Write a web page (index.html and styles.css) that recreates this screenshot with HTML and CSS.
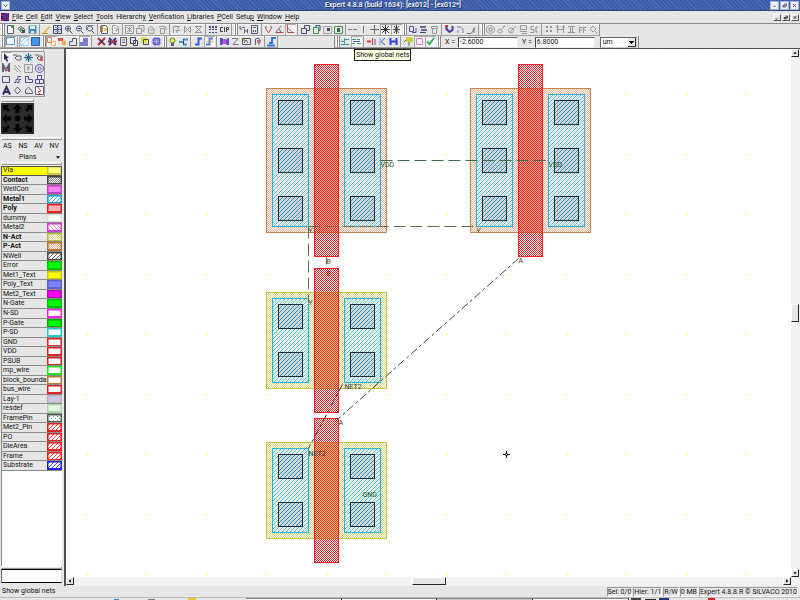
FILE: index.html
```html
<!DOCTYPE html>
<html lang="en">
<head>
<meta charset="utf-8">
<title>Expert 4.8.8 (build 1634): [ex012] - [ex012*]</title>
<link rel="stylesheet" href="styles.css">
</head>
<body>
<header class="titlebar">
  <button class="win-btn" aria-label="Window menu"><svg viewBox="0 0 9 9"><path d="M2 3l2.500 3L7 3" fill="none" stroke="#335" /></svg></button>
  <h1>Expert 4.8.8 (build 1634): [ex012] - [ex012*]</h1>
  <div class="win-group">
    <button class="win-btn" aria-label="Minimize"><svg viewBox="0 0 9 9"><path d="M3 5.500h3" stroke="#335"/></svg></button>
    <button class="win-btn" aria-label="Restore"><svg viewBox="0 0 9 9"><path d="M2.500 4.500h3v2h-3zM4 2.500h3v3" fill="none" stroke="#335"/></svg></button>
    <button class="win-btn" aria-label="Close"><svg viewBox="0 0 9 9"><path d="M2.500 2.500l4 4m0-4l-4 4" stroke="#335"/></svg></button>
  </div>
</header>
<nav class="menubar">
  <svg class="app-icon" viewBox="0 0 9 9"><path fill="#102080" d="M0 0h9v9H0z"/><path fill="#e01840" d="M0 1h3v2H0zM5 0h3v2H5zM2 4h4v2H2zM0 7h3v2H0zM7 5h2v3H7z"/><path fill="#4060ff" d="M3 2h2v2H3zM6 3h2v1H6zM4 7h2v1H4z"/></svg>
  <a href="#"><u>F</u>ile</a><a href="#"><u>C</u>ell</a><a href="#"><u>E</u>dit</a><a href="#"><u>V</u>iew</a><a href="#"><u>S</u>elect</a><a href="#"><u>T</u>ools</a><a href="#">Hierarch<u>y</u></a><a href="#"><u>V</u>erification</a><a href="#"><u>L</u>ibraries</a><a href="#"><u>P</u>Cell</a><a href="#">Setu<u>p</u></a><a href="#"><u>W</u>indow</a><a href="#"><u>H</u>elp</a>
  <div class="mdi-group">
    <button class="mdi-btn" aria-label="Minimize document"><svg viewBox="0 0 8 7"><path d="M2 5.500h3" stroke="#000"/></svg></button>
    <button class="mdi-btn" aria-label="Restore document"><svg viewBox="0 0 8 7"><path d="M1.500 3.500h3v2h-3zM3 1.500h3v3" fill="none" stroke="#000"/></svg></button>
    <button class="mdi-btn" aria-label="Close document"><svg viewBox="0 0 8 7"><path d="M2 1.500l4 4m0-4l-4 4" stroke="#000"/></svg></button>
  </div>
</nav>
<div class="toolrow">
  <div class="toolbar" data-tools=": new open save | pen fit zoomin zoomout zoomsel | paste gpage | gsel gcopy ghand gturn | gflag gmir gsand / dots cif | : net calc | tri ang ang2* / cas1 cas2 cas3 cas4 | dash vline cross star* star2* : rev stack gtrash / mag hook pen2 | : gcirc ggear ggear2 gbox gsc / g4 gh gi gff gzoom"></div>
</div>
<div class="toolrow">
  <div class="toolbar" data-tools=": sqo* | sqh* sqf : lay1* lay2 poly1 poly2* _ x1 x2 doc1 doc2 doc3 doc4 : bulb plug / snake snake2* / bow gz pic ear | wave"></div>
  <div class="toolbar second" data-tools=": nets nets2* / rnet knet hnet / note pink* check* :">
  </div>
  <form class="coords">
    <label for="cx">X =</label><input id="cx" value="-2.6000">
    <label for="cy">Y =</label><input id="cy" value="6.8000">
    <select aria-label="Units"><option>um</option></select>
  </form>
</div>
<div class="workspace">
  <aside class="side">
    <div class="grip short"></div>
    <div class="toolbox" data-box="arrow* hand move handr mred ghatch gpat ring rect snk ell boxes text circ blob red"></div>
    <div class="grip short mid"></div>
    <svg class="navpad" viewBox="0 0 33 31" role="img" aria-label="Pan">
      <path fill="#2c2c2c" d="M0 0h33v31H0z"/>
      <g fill="#050505"><path d="M16.500 1l5 5h-3v4h-4V6h-3zM16.500 30l5-5h-3v-4h-4v4h-3zM1 15.500l5-5v3h4v4H6v3zM32 15.500l-5-5v3h-4v4h4v3zM2 2h6L6 4l3 3-2 2-3-3-2 2zM31 2h-6l2 2-3 3 2 2 3-3 2 2zM2 29h6l-2-2 3-3-2-2-3 3-2-2zM31 29h-6l2-2-3-3 2-2 3 3 2-2z"/><circle cx="16.500" cy="15.500" r="3"/></g>
    </svg>
    <div class="grip wide"></div>
    <div class="filters"><button>AS</button><button>NS</button><button>AV</button><button>NV</button></div>
    <button class="plans">Plans<svg viewBox="0 0 5 3"><path d="M0 0h5L2.500 3z"/></svg></button>
    <div class="grip wide"></div>
    <ul class="layers"></ul>
    <div class="blank"></div>
    <div class="grip wide"></div>
    <div class="entry"></div>
  </aside>
  <main class="view">
    <div class="canvas-row">
      <svg class="canvas" role="img" aria-label="Layout view">
        <defs>
          <pattern id="grid" width="6" height="6" patternUnits="userSpaceOnUse"><path fill="#ffffe0" d="M2 3h1v1H2z"/></pattern>
          <pattern id="major" x="-10" y="15" width="60" height="60" patternUnits="userSpaceOnUse"><path fill="#ffffa8" d="M30 29h1v3h-1zM29 30h3v1h-3z"/></pattern>
          <pattern id="poly" x=".5" y=".5" width="2" height="2" patternUnits="userSpaceOnUse"><path fill="#ff1c24" d="M0 0h1v1H0zM1 1h1v1H1z"/></pattern>
          <pattern id="pact" x=".5" y=".5" width="2" height="2" patternUnits="userSpaceOnUse"><path fill="#dca078" fill-opacity=".8" d="M1 0h1v1H1zM0 1h1v1H0z"/></pattern>
          <pattern id="nact" x=".5" y=".5" width="2" height="2" patternUnits="userSpaceOnUse"><path fill="#cccc60" fill-opacity=".8" d="M1 0h1v1H1zM0 1h1v1H0z"/></pattern>
          <pattern id="metal" x=".5" y=".5" width="4" height="4" patternUnits="userSpaceOnUse"><path fill="#e0f8ff" fill-opacity=".5" d="M0 0h4v4H0z"/><path stroke="#38b4dc" stroke-opacity=".8" d="M-1 1l2-2M0 4l4-4M3 5l2-2"/></pattern>
          <pattern id="cont" x=".5" y=".5" width="4" height="4" patternUnits="userSpaceOnUse"><path fill="#88a8bc" fill-opacity=".3" d="M0 0h4v4H0z"/><path stroke="#2078a4" stroke-opacity=".75" d="M-1 1l2-2M0 4l4-4M3 5l2-2"/></pattern>
          <g id="strip3"><rect class="metal" width="36" height="132"/><rect class="cont" x="6" y="6" width="24" height="24"/><rect class="cont" x="6" y="54" width="24" height="24"/><rect class="cont" x="6" y="102" width="24" height="24"/></g>
          <g id="strip2"><rect class="metal" width="36" height="84"/><rect class="cont" x="6" y="6" width="24" height="24"/><rect class="cont" x="6" y="54" width="24" height="24"/></g>
          <g id="pmos"><rect class="pact" y="24" width="120" height="144"/><rect class="poly" x="48" width="24" height="192"/><use href="#strip3" x="6" y="30"/><use href="#strip3" x="78" y="30"/></g>
          <g id="nmos"><rect class="nact" y="24" width="120" height="96"/><rect class="poly" x="48" width="24" height="144"/><use href="#strip2" x="6" y="30"/><use href="#strip2" x="78" y="30"/></g>
        </defs>
        <rect width="100%" height="100%" fill="#fff"/>
        <rect width="100%" height="100%" fill="url(#grid)"/>
        <rect width="100%" height="100%" fill="url(#major)"/>
        <g transform="translate(-65.500 -48.500)">
          <use href="#pmos" x="266" y="64"/>
          <use href="#pmos" x="470" y="64"/>
          <use href="#nmos" x="266" y="268"/>
          <use href="#nmos" x="266" y="418"/>
          <g class="nets" fill="none">
            <path stroke="#3c6c50" stroke-dasharray="12 5" d="M380 160H548"/>
            <path stroke="#706840" stroke-dasharray="12 5" d="M308 226H474"/>
            <path stroke="#706840" stroke-dasharray="12 5" d="M308 226V302"/>
            <path stroke="#66683c" d="M326 256v8"/>
            <path stroke="#444430" stroke-dasharray="8 3 3 3" d="M518 258L338 418"/>
            <path stroke="#204048" stroke-dasharray="8 3 3 3" d="M342 384L308 448"/>
          </g>
          <g class="labels">
            <g fill="#1c5030"><text x="380" y="166">VDD</text><text x="548" y="166">VDD</text></g>
            <g fill="#50501c"><text x="308" y="232">Y</text><text x="476" y="232">Y</text><text x="308" y="304">Y</text><text x="326" y="263">B</text></g>
            <text x="326" y="275" fill="#801004">B</text>
            <g fill="#184048"><text x="344" y="388">NET2</text><text x="308" y="455">NET2</text></g>
            <text x="362" y="496" fill="#205010">GND</text>
            <g fill="#383818"><text x="518" y="262">A</text><text x="338" y="424">A</text></g>
          </g>
          <path fill="#888" d="M504.500 452.500h3v3h-3z"/><path fill="none" stroke="#000" d="M502.500 454h7M506 450.500v7"/><path fill="#fff" d="M505.500 453.500h1v1h-1z"/>
        </g>
      </svg>
      <div class="vscroll"><button aria-label="Scroll up"><svg viewBox="0 0 7 7"><path d="M1.500 4.500L3.500 2l2 2.500z"/></svg></button><div class="vthumb"></div><button aria-label="Scroll down"><svg viewBox="0 0 7 7"><path d="M1.500 2.500L3.500 5l2-2.500z"/></svg></button></div>
    </div>
    <div class="hscroll"><button aria-label="Scroll left"><svg viewBox="0 0 7 7"><path d="M4.500 1.500L2 3.500l2.500 2z"/></svg></button><div class="hthumb"></div><button aria-label="Scroll right"><svg viewBox="0 0 7 7"><path d="M2.500 1.500L5 3.500l-2.500 2z"/></svg></button></div>
    <div class="tooltip" role="tooltip">Show global nets</div>
  </main>
</div>
<footer class="status">
  <span class="hint">Show global nets</span>
  <span class="cell">Sel: 0/0</span><span class="cell">Hier: 1/1</span><span class="cell">R/W</span><span class="cell">0 MB</span><span class="cell">Expert 4.8.8.R © SILVACO 2010</span>
</footer>
<div class="taskbar"><i class="launch"></i><i class="task"></i><i class="task"></i><i class="task dim"></i><i class="task"></i><i class="tray"></i></div>
<script src="app.js"></script>
</body>
</html>
```
FILE: styles.css
```css
* { box-sizing: border-box; }
html, body { height: 100%; }
body {
  margin: 0;
  display: flex;
  flex-direction: column;
  overflow: hidden;
  background: #e6e6e6;
  color: #111;
  font: 7px/9px Roboto, "Liberation Sans", sans-serif;
}
button, input, select { font: inherit; color: inherit; }
button { padding: 0; border: 0; background: none; display: block; }
svg { display: block; }
a { color: inherit; text-decoration: none; }
u { text-underline-offset: 1px; text-decoration-thickness: 1px; }

.titlebar {
  flex: none;
  display: flex;
  align-items: center;
  height: 11px;
  padding: 0 1px;
  color: #fff;
  border-bottom: 1px solid #2c4480;
  background: repeating-linear-gradient(45deg, #4a6cb4 0 1px, #3c5ca4 1px 3px);
}
.titlebar h1 { flex: 1; margin: 0; padding-left: 6px; font-size: 7px; line-height: 9px; font-weight: 500; text-align: center; text-shadow: 1px 1px #1c2c60; }
.win-group { display: flex; gap: 1px; }
.win-btn { width: 9px; height: 9px; background: #eef0f8; border: 1px solid #a8b4d4; }
.win-btn svg { width: 7px; height: 7px; }

.menubar { flex: none; display: flex; align-items: center; height: 13px; gap: 3px; padding: 0 1px; border-bottom: 1px solid #8c8c8c; }
.menubar .app-icon { width: 8px; height: 8px; }
.mdi-group { margin-left: auto; display: flex; gap: 1px; }
.mdi-btn { width: 8px; height: 7px; border: 1px solid; border-color: #fff #555 #555 #fff; background: #e6e6e6; }
.mdi-btn svg { width: 6px; height: 5px; }

.toolrow { flex: none; display: flex; height: 12px; }
.toolbar { display: flex; align-items: center; border-right: 1px solid #8c8c8c; border-bottom: 1px solid #a0a0a0; box-shadow: inset 0 1px #fafafa; }
.toolbar.second { margin-left: 56px; border-left: 1px solid #8c8c8c; border-right: 0; }
.tool { width: 11px; height: 11px; }
.tool svg { width: 11px; height: 11px; opacity: .85; }
.tool.on { background: #f4f4f6; box-shadow: inset 1px 1px #aaa; }
.sep3, .sep4, .sep5, .sep6 { height: 11px; background: linear-gradient(#999, #999) 1px 0 / 1px 100% no-repeat; }
.sep3 { width: 3px; }
.sep4 { width: 4px; }
.sep6 { width: 6px; }
.sep5 { width: 5px; background: linear-gradient(90deg, transparent 1px, #fff 1px 2px, #888 2px 3px, #fff 3px 4px, #888 4px); }
.coords { display: flex; align-items: center; border-right: 1px solid #888; padding: 0 1px 0 4px; }
.coords input { width: 60px; height: 11px; border: 1px solid; border-color: #666 #eee #eee #444; background: #fff; padding: 0 1px; margin: 0 4px 0 3px; }
.coords select {
  width: 37px; height: 11px; border: 1px solid; border-color: #666 #ccc #ccc #666; padding: 0 2px; margin-left: 1px; border-radius: 0; appearance: none;
  background: linear-gradient(#000, #000) right 2px top 3px / 5px 1px no-repeat, linear-gradient(#000, #000) right 3px top 4px / 3px 1px no-repeat, linear-gradient(#000, #000) right 4px top 5px / 1px 1px no-repeat, linear-gradient(#333, #333) right 0 top 0 / 1px 100% no-repeat, linear-gradient(#333, #333) right 0 bottom 0 / 8px 1px no-repeat, linear-gradient(#e6e6e6, #e6e6e6) right / 8px 100% no-repeat, #fff;
}

.workspace { flex: 1; min-height: 0; display: flex; }
.side { flex: none; width: 64px; display: flex; flex-direction: column; padding: 0 2px 3px 1px; border-top: 1px solid #888; }
.grip { flex: none; height: 3px; border: 1px solid; border-color: #fff #999 #999 #fff; }
.grip.short { width: 43px; }
.grip.mid { width: 33px; margin: 2px 0 1px; }
.toolbox { display: grid; grid-template-columns: repeat(4, 11px); grid-auto-rows: 11px; width: 44px; border-right: 1px solid #999; border-bottom: 1px solid #999; }
.toolbox .tool { height: 10px; }
.navpad { width: 33px; height: 31px; margin-bottom: 3px; }
.filters { display: flex; justify-content: space-between; padding: 2px 3px 0 2px; }
.plans { display: flex; align-items: center; justify-content: space-between; padding: 2px 2px 0 18px; }
.plans svg { width: 4px; height: 3px; }
.layers { flex: none; list-style: none; margin: 1px 0 0; padding: 0; height: 305px; display: grid; grid-auto-rows: 1fr; }
.layer { display: flex; min-height: 0; overflow: hidden; border-bottom: 1px solid #8c8c8c; border-left: 1px solid #888; }
.layer span { flex: 1; min-width: 0; padding-left: 1px; overflow: hidden; white-space: nowrap; }
.layer.bold span { font-weight: 700; }
.layer.sel { background: #ff0; outline: 1px solid #555; outline-offset: -1px; }
.swatch { width: 15px; height: 100%; flex: none; }
.blank { flex: 1; background: #fff; border-left: 1px solid #888; }
.entry { height: 14px; background: #fff; border: 1px solid #000; border-color: #000 #ddd #000 #666; }

.view { flex: 1; min-width: 0; position: relative; display: flex; flex-direction: column; border-left: 2px solid #505050; border-top: 1px solid #505050; }
.canvas-row { flex: 1; min-height: 0; display: flex; }
.canvas { flex: 1; min-width: 0; height: 100%; }
.canvas .pact { fill: url(#pact); stroke: #c88450; }
.canvas .nact { fill: url(#nact); stroke: #c4c440; }
.canvas .poly { fill: url(#poly); stroke: #ff1820; }
.canvas .metal { fill: url(#metal); stroke: #28b0e0; }
.canvas .cont { fill: url(#cont); stroke: #202840; }
.labels { font-size: 7px; }
.vscroll { width: 9px; background: #f2f2f2; display: flex; flex-direction: column; }
.vscroll button, .hscroll button { width: 8px; height: 8px; border: 1px solid; border-color: #fff #222 #222 #fff; background: #e6e6e6; }
.vscroll svg, .hscroll svg { width: 6px; height: 6px; }
.vthumb { width: 8px; height: 18px; margin: 247px 0 auto; border: 1px solid; border-color: #fff #222 #222 #fff; background: #e6e6e6; }
.hscroll { height: 9px; background: #f2f2f2; display: flex; padding-right: 9px; }
.hthumb { width: 34px; height: 8px; margin: 0 auto; border: 1px solid; border-color: #fff #222 #222 #fff; background: #e6e6e6; }
.tooltip { position: absolute; left: 288px; top: 0; padding: 0 1px; line-height: 10px; background: #ffffe4; border: 1px solid #222; white-space: nowrap; }

.status { flex: none; display: flex; align-items: center; height: 11px; padding: 0 2px; gap: 1px; }
.status .hint { flex: 1; }
.status .cell { border: 1px solid; border-color: #999 #fff #fff #999; white-space: nowrap; line-height: 8px; }
.taskbar { flex: none; display: flex; height: 3px; border-top: 1px solid #bbb; }
.taskbar .launch { flex: 247; background: linear-gradient(#38c, #38c) 114px 1px / 5px 2px no-repeat, linear-gradient(#778, #778) 148px 1px / 7px 2px no-repeat, linear-gradient(#ec3, #ec3) 188px 0 / 8px 2px no-repeat; }
.taskbar .task { flex: 95; background: #f6f6f6; border-right: 1px solid #222; border-top: 1px solid #888; }
.taskbar .dim { background: #c8c8c8; }
.taskbar .tray { flex: 172; background: linear-gradient(#444, #444) 2px 0 / 10px 3px no-repeat, linear-gradient(#222, #222) 16px 1px / 11px 2px no-repeat, linear-gradient(#238, #238) 30px 0 / 10px 3px no-repeat, linear-gradient(#c22, #c22) 79px 0 / 7px 3px no-repeat; }
```
FILE: app.js
```js
// p(): stroked path, f(): filled path, both on an 11 x 11 box
const p = (d, c = "#223060", w = 1) => `<path d="${d}" fill="none" stroke="${c}" stroke-width="${w}"/>`;
const f = (d, c = "#223060") => `<path d="${d}" fill="${c}"/>`;
const g = "#8a8a8a";
const lens = p("M5 2a2.500 2.500 0 1 1-.1 0M7 7l2.500 2.500");
const page = (c) => `<path d="M2.500 1.500h4l2 2v6h-6z" fill="#fff" stroke="${c}"/>`;
const stairs = (c) => p("M2 8.500h3.500V2.500H9", c, 2);

const icons = {
  new: page("#345") + f("M6 1h3v3H6z", "#282"),
  open: p("M2 4.500l3-2 4 3-3 3.500z", "#445") + f("M4 4h3v3H4z", "#2a4") + f("M6 6h3v3H6z", "#333"),
  save: f("M1.500 1.500h8v8h-8z", "#2878b8") + f("M3 2h5v3H3zM4 7h3v2H4z", "#eef"),
  pen: f("M2 9l6-7 1 1-5 6z", "#e0b020") + p("M1 9.500h6", "#a80"),
  fit: p("M1.500 1.500h8v8h-8zM5.500 2v7M2 5.500h7") + p("M3 3.500h5M3 7.500h5", "#68a"),
  zoomin: lens + p("M3.500 4.500h3M5 3v3"), zoomout: lens + p("M3.500 4.500h3"),
  zoomsel: lens + p("M1.500 6V1.500H8.500", "#668"),
  paste: page("#445") + f("M1 2h3v6H1z", "#987030") + f("M5 4h3v3H5z", "#dc4"),
  gpage: page(g) + p("M4 4h3v3H5", g),
  gsel: p("M1.500 1.500h8v8h-8zM3 3l5 5M8 3L3 8M5.500 3v5", g),
  gcopy: p("M1.500 4.500h5v5h-5zM4 4V1.500h5V7H7", g),
  ghand: p("M2.500 9V5L5 2l3 3v4.500zM4 6h3", g),
  gturn: p("M3.500 4.500h4v5h-4zM2 3l3-1 4 1v3", g),
  gflag: p("M2.500 9V2.500h6l-2 2 2 2h-4M6 9V7", g),
  gmir: p("M2.500 2v7M8.500 2v7M3 3l5 5M8 3L3 8", g),
  gsand: p("M2 2.500h7M2 8.500h7M3 3l5 5M8 3L3 8", g),
  dots: f("M1 2h2v2H1zM4 2h2v2H4zM7 2h2v2H7zM1 5h2v1H1zM4 5h2v1H4zM7 5h2v1H7zM1 8h2v1H1zM4 8h2v1H4zM7 8h2v1H7z"),
  cif: p("M4 3.500H1.500v4H4M5.500 3v5M7.500 8V3.500h2v2H8", "#223"),
  net: p("M2 2v3h2M4 3.500h3M6.500 5v4M9.500 5v4M7 7h2", "#445"),
  calc: p("M2.500 1.500h6v8h-6z", "#346") + f("M4 3h3v1H4zM4 6h1v2H4zM6 6h1v2H6z", "#346"),
  tri: p("M2 3l3.500 6L9 3M2 3h2M7 3h2", "#a44"),
  ang: p("M1.500 8.500h8M2 8l5-6", "#a33") + p("M5 5l2 3", "#446"),
  ang2: p("M2.500 1v7.500H9.500", "#a33") + p("M3 4l4 4", "#c55"),
  cas1: p("M1.500 4.500h5v5h-5zM4.500 4V1.500h5v5H7"),
  cas2: p("M2.500 3.500h5v6h-5z", "#283") + p("M5 3V1.500h4v5H8"),
  cas3: p("M1.500 2.500h8v7h-8z", "#99a") + f("M5 4h3v3H5z"),
  cas4: p("M1.500 2.500h8v7h-8z", "#283") + f("M4 4h3v4H4z", "#152"),
  dash: p("M1 5.500h4M6 5.500h4", "#667"), vline: p("M5.500 2v7", "#667"), cross: p("M5.500 1v9M1 5.500h9", "#556"),
  star: p("M5.500 1v9M1 5.500h9M2 2l7 7M9 2L2 9", "#111"), star2: p("M5.500 1v9M2 5.500h7M3 2l5 7M8 2L3 9", "#223"),
  rev: p("M2.500 2.500h4v5h-4zM5 8.500h4V4", "#338"), stack: f("M2 2h6v2H2zM3 5h6v2H3z", "#558") + p("M2 8.500h6"),
  gtrash: p("M2.500 2.500h6v2h-6zM3.500 5v4.500h4V5", g),
  mag: p("M2.500 1v4l3 3 3-2V2", "#228", 2) + f("M1 1h3v2H1z", "#c22"), hook: p("M2 3h4l2 2v4M3 6v3", "#778"), pen2: p("M1 9.500h4l4-6M8 4v5", "#556"),
  gcirc: p("M5.500 1.500a4 4 0 1 1-.1 0M4 4h3v3H4z", g), ggear: p("M4 5a2 2 0 1 1-.1 0M6 5l3-3H7", g), ggear2: p("M4 4a2.500 2.500 0 1 1-.1 0M6 5l3-3M2 9l4-4", g),
  gbox: p("M2.500 1.500h6v4h-6zM2 7.500h7M4 9.500h5", g), gsc: p("M5 2.500H2v3h3v3H1M9 3H7v5h2", g),
  g4: f("M2 2h2v2H2zM6 2h2v2H6zM2 6h2v2H2zM6 6h2v2H6z", g), gh: p("M2.500 1v8M8.500 1v8M3 5.500h5M1 3h3M7 3h3", g),
  gi: p("M2 2.500h7M2 8.500h7M4.500 2v7M6.500 2v7", g), gff: p("M2.500 9V3.500h3M3 6h2M6.500 9V3.500h3M7 6h2", g), gzoom: p("M5 2l3 3-3 3-3-3zM7 7l2.500 2.500", g),
  sqo: p("M1.500 1.500h8v7h-8z", "#38c"), sqh: p("M1.500 1.500h8v8h-8zM2 6l4-4M3 9l6-6", "#8cf"), sqf: `<path d="M1.500 1.500h8v8h-8z" fill="#28e" stroke="#248"/>`,
  lay1: p("M1.500 1.500h4v5h-4z", "#e63") + p("M5.500 5.500h4v4h-4z", "#fa3"), lay2: f("M1 2h5v3H1z", "#e33") + f("M5 5h4v4H5z", "#f93"),
  poly1: p("M1.500 9.500v-4h3v-3h4v7z", "#446"), poly2: f("M1 10V6h3V2h5v8z", "#66c"),
  x1: p("M2 2l7 7M9 2L2 9", "#a13", 2) + f("M4 4h3v3H4z", "#224"), x2: p("M2 2l7 7M9 2L2 9M1 5.500h9", "#216", 2) + f("M4 4h3v3H4z", "#c22"),
  doc1: p("M2.500 1.500h6v8h-6zM4 4h3M4 6.500h3", "#446"), doc2: p("M1.500 1.500h5v6h-5zM4.500 4.500h4v5h-4z", "#224", 1), doc3: f("M1 1h6v6H1z", "#dd2") + p("M3.500 3.500h5v5h-5z", "#334"),
  doc4: p("M2.500 2.500h6v6h-6zM1 4h9M1 7h9M4 1v9M7 1v9", "#44c"),
  bulb: `<circle cx="5.500" cy="4.500" r="2.500" fill="#ee2" stroke="#663"/>` + f("M4 7h3v3H4z", "#445"), plug: p("M1 6h4M5 3.500h5M5 8.500h4", "#28c", 2) + p("M5.500 3v6"),
  snake: stairs("#14d"), snake2: stairs("#46c") + p("M3 5.500h6", "#aa4"),
  bow: f("M1 2h2l3 3 3-3h1v7H8L5.500 6 3 9H1z", "#33d") + f("M4 3h3v5H4z", "#d3a"), gz: p("M2 2.500h6L3 8.500h6", "#667"), pic: p("M1.500 2.500h8v6h-8zM3 7l2-3 2 3", "#446") + f("M2 3h2v2H2z", "#c90"),
  ear: p("M3.500 9V3l3-1 2 3-2 4", "#446") + f("M5 4h3v3H5z", "#c55"), wave: p("M1 9.500h8M3 7h3V2h4", "#16d", 2),
  nets: p("M1 5.500h3M5 3.500h4M1 8.500h8", "#18a") + f("M4 2h1v6H4z", "#2a6"), nets2: p("M1 3.500h4M6 3.500h3M1 7.500h3M6 7.500h4", "#286") + p("M2 5.500h7", "#24a"),
  rnet: p("M1 5.500h4", "#c22", 2) + p("M6.500 2v7M9 3v6", "#824"), knet: p("M3 2v7", "#2ad") + p("M8 2L4 5.500l4 3.500", "#24c"), hnet: p("M2.500 2v7M8.500 2v7M3 5.500h5", "#12e", 2),
  note: f("M3 1h7v5H3z", "#cc2") + p("M3 4l-2 2M6 6v4", "#444"), pink: p("M2.500 2.500h6v6h-6z", "#d6c"), check: p("M2 5.500L4.500 8 9 2", "#1a3", 2),
  arrow: f("M3 1l5 5H6l1 3-1 1-2-3-1 1z", "#114"), hand: p("M1 3h4M3 6l2-2h4v4H5z", "#446"), move: f("M2 2h7v7H2z", "#8ce") + p("M5.500 1v9M1 5.500h9M3 3l5 5M8 3L3 8", "#245"), handr: p("M1 3h4M3 6l2-2h3v4H5z", "#446") + f("M6 5h3v4H6z", "#c44"),
  mred: p("M2 9V2l3 5 3-5v7", "#446", 2) + p("M3 4l5 5", "#d44"), ghatch: p("M2 2l7 7M2 5l4 4M6 2l3 3", g), gpat: p("M1.500 1.500h8v8h-8zM4 5h3M5 3v5", g), ring: p("M5.500 1.500a4 4 0 1 1-.1 0M5.500 4a1.500 1.500 0 1 1-.1 0", "#338"),
  rect: p("M1.500 2.500h7v6h-7z", "#338"), snk: p("M2 8.500h2v-3h2v-3h3M5 8.500h2v-3h2", "#338"), ell: p("M2.500 2.500h3v3h4v3h-7z", "#338"), boxes: p("M3.500 1.500h4v4h-4zM1.500 5.500h4v4h-4zM5.500 5.500h4v4h-4z", "#338"),
  text: p("M2 9.500L5.500 2 9 9.500M3 7h5", "#114", 2), circ: p("M5.500 2l3 3.500-3 3.500-3-3.500z", "#446"), blob: p("M2.500 8.500V5l3-3 4 5v1.500z", "#446"), red: `<path d="M1.500 1.500h8v8h-8z" fill="#fff" stroke="#448"/>` + p("M4 2l3 4-3 1 3 3", "#e11")
};
const seps = { "|": "sep3", "/": "sep4", ":": "sep5", "_": "sep6" };

function tool(token) {
  if (seps[token]) return `<div class="${seps[token]}"></div>`;
  const name = token.replace("*", "");
  const cls = "tool" + (token.endsWith("*") ? " on" : "");
  return `<button class="${cls}" aria-label="${name}"><svg viewBox="0 0 11 11">${icons[name]}</svg></button>`;
}
document.querySelectorAll("[data-tools]").forEach(el => { el.innerHTML = el.dataset.tools.trim().split(/\s+/).map(tool).join(""); });
document.querySelectorAll("[data-box]").forEach(el => { el.innerHTML = el.dataset.box.split(" ").map(tool).join(""); });

// name, border, fill, pattern (s solid, c checker, h hatch, b back hatch, d dots), bold
const layers = [
  ["Via", "#c8c840", "#ffff80", "s"], ["Contact", "#444", "#888", "c", 1], ["WellCon", "#c040c0", "#ff80ff", "s"],
  ["Metal1", "#20a0d8", "#40b0e8", "h", 1], ["Poly", "#e02020", "#ffb4b4", "s", 1], ["dummy", "#ddd", "#fff", "s"],
  ["Metal2", "#d040d0", "#f080f0", "b"], ["N-Act", "#b8b840", "#d8d888", "c", 1], ["P-Act", "#b87030", "#e0b080", "c", 1],
  ["NWell", "#444", "#666", "h"], ["Error", "#00c000", "#00ff00", "s"], ["Met1_Text", "#c8c800", "#ffff00", "s"],
  ["Poly_Text", "#6060d0", "#8080ff", "s"], ["Met2_Text", "#c000c0", "#ff00ff", "s"], ["N-Gate", "#00c000", "#00ff00", "s"],
  ["N-SD", "#f020f0", "#fff", "s"], ["P-Gate", "#00a000", "#00ff00", "s"], ["P-SD", "#20c8d0", "#fff", "s"],
  ["GND", "#e02020", "#fff", "s"], ["VDD", "#e02020", "#fff", "s"], ["PSUB", "#d02020", "#fff", "s"],
  ["mp_wire", "#20e020", "#fff", "s"], ["block_boundary", "#b87830", "#fff", "s"], ["bus_wire", "#e02020", "#fff", "s"],
  ["Lay-1", "#b8b0c8", "#d0c8e0", "s"], ["resdef", "#a8d8a8", "#c8f0c8", "c"], ["FramePin", "#486048", "#80a080", "d"],
  ["Met2_Pin", "#e02020", "#ff4040", "h"], ["PO", "#d02020", "#ff4040", "h"], ["DieArea", "#e02020", "#ff4040", "h"],
  ["Frame", "#e02020", "#ff4040", "h"], ["Substrate", "#2020d0", "#5050ff", "h"]
];
const fills = {
  s: c => `<path fill="${c}" d="M0 0h4v4H0z"/>`,
  c: c => `<path fill="${c}" d="M0 0h1v1H0zM2 0h1v1H2zM1 1h1v1H1zM3 1h1v1H3zM0 2h1v1H0zM2 2h1v1H2zM1 3h1v1H1zM3 3h1v1H3z"/>`,
  h: c => `<path stroke="${c}" d="M-1 1l2-2M0 4l4-4M3 5l2-2"/>`,
  b: c => `<path stroke="${c}" d="M-1 3l2 2M0 0l4 4M3-1l2 2"/>`,
  d: c => `<path fill="${c}" d="M0 0h1v1H0zM2 2h1v1H2z"/>`
};
document.querySelector(".layers").innerHTML = layers.map(([name, line, fill, kind, bold], i) =>
  `<li class="layer${bold ? " bold" : ""}${i ? "" : " sel"}"><span>${name}</span><svg class="swatch"><defs><pattern id="sw${i}" width="4" height="4" patternUnits="userSpaceOnUse">${fills[kind](fill)}</pattern></defs><rect width="15" height="100%" fill="#fff"/><rect width="15" height="100%" fill="url(#sw${i})" stroke="${line}" stroke-width="3"/></svg></li>`).join("");
```
